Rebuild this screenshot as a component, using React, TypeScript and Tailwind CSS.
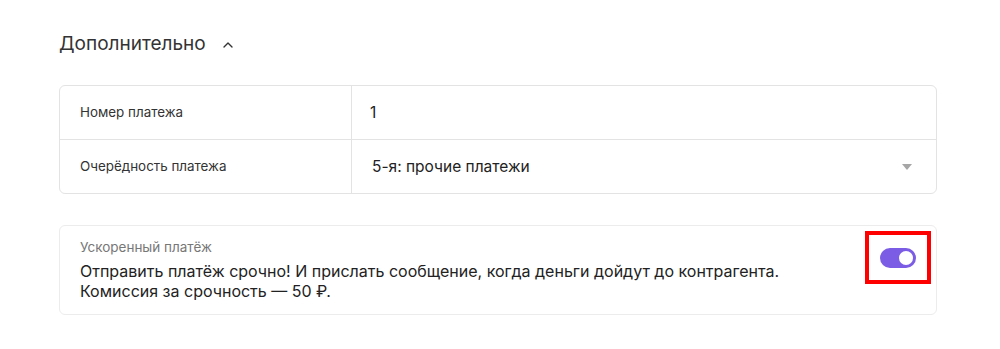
import { ChevronUp } from 'lucide-react';

const font = { fontFamily: 'Inter, "Noto Sans", sans-serif' };

export default function App() {
  return (
    <div className="min-h-[349px] w-[1000px] bg-white pl-[59px] pr-[63px] pt-[30px] text-[#333]" style={font}>
      <div className="flex h-[28px] items-center gap-[14px]">
        <h2 className="text-[19px] leading-[28px] text-[#333]">Дополнительно</h2>
        <ChevronUp size={16} strokeWidth={2} className="mt-[2px] text-[#333]" />
      </div>

      <div className="mt-[27px] overflow-hidden rounded-[6px] border border-[#e3e3e3]">
        <div className="flex h-[54px] items-center border-b border-[#e3e3e3]">
          <div className="flex h-full w-[292px] items-center border-r border-[#e3e3e3] pl-[20px] text-[13.4px] text-[#333]">
            Номер платежа
          </div>
          <div className="pl-[18px] text-[15.5px] text-[#222]">1</div>
        </div>
        <div className="flex h-[53px] items-center">
          <div className="flex h-full w-[292px] items-center border-r border-[#e3e3e3] pl-[20px] text-[13.4px] text-[#333]">
            Очерёдность платежа
          </div>
          <div className="flex flex-1 items-center justify-between pl-[20px] pr-[24px] text-[15.5px] text-[#222]">
            <span>5-я: прочие платежи</span>
            <svg width="10" height="6" viewBox="0 0 10 6">
              <path d="M0 0h10L5 6z" fill="#a6a6a6" />
            </svg>
          </div>
        </div>
      </div>

      <div className="mt-[31px] flex items-start justify-between rounded-[6px] border border-[#ececec] pb-[13px] pl-[20px] pr-[20px] pt-[11px]">
        <div>
          <div className="h-[20px] text-[13.5px] leading-[20px] text-[#777]">Ускоренный платёж</div>
          <div className="mt-[4px] h-[20px] overflow-visible whitespace-nowrap text-[16px] leading-[20px] text-[#222]">
            Отправить платёж срочно! И прислать сообщение, когда деньги дойдут до контрагента.
          </div>
          <div className="h-[20px] overflow-visible whitespace-nowrap text-[16px] leading-[20px] text-[#222]">
            Комиссия за срочность — 50 ₽.
          </div>
        </div>
        <div className="relative mt-[11px]">
          <button
            type="button"
            className="relative block h-[20px] w-[36px] rounded-full bg-[#7b5ce4]"
          >
            <span className="absolute right-[3px] top-[3px] h-[14px] w-[14px] rounded-full bg-white" />
          </button>
          <div className="pointer-events-none absolute -left-[15px] -right-[15px] -top-[17px] -bottom-[16px] border-[4px] border-[#ff0000]" />
        </div>
      </div>
    </div>
  );
}
